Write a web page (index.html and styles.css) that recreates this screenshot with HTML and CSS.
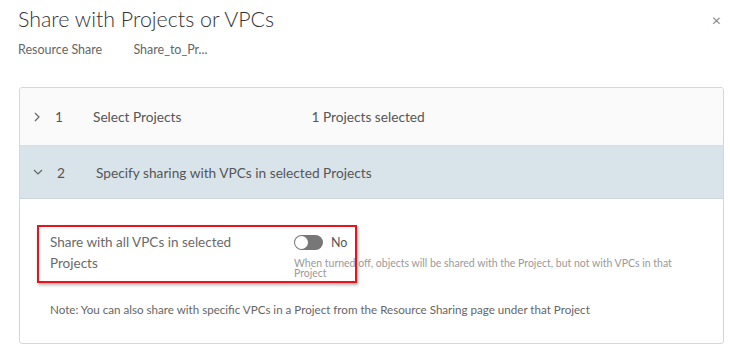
FILE: index.html
```html
<!DOCTYPE html>
<html lang="en">
<head>
  <meta charset="UTF-8">
  <title>Share with Projects or VPCs</title>
  <link rel="stylesheet" href="styles.css">
</head>
<body>
  <div class="modal">
    <div class="modal-head">
      <div class="modal-title">Share with Projects or VPCs</div>
      <div class="close">&times;</div>
    </div>
    <div class="crumbs">
      <span>Resource Share</span>
      <span>Share_to_Pr...</span>
    </div>

    <div class="stepper">
      <div class="step step-done">
        <svg class="chev" width="6" height="10" viewBox="0 0 6 10"><path d="M1 1 L5 5 L1 9" fill="none" stroke="#666" stroke-width="1.2"/></svg>
        <span class="num">1</span>
        <span class="step-name">Select Projects</span>
        <span class="step-sum">1 Projects selected</span>
      </div>
      <div class="step step-open">
        <svg class="chev-down" width="10" height="6" viewBox="0 0 10 6"><path d="M1 1 L5 5 L9 1" fill="none" stroke="#666" stroke-width="1.2"/></svg>
        <span class="num">2</span>
        <span class="step-name">Specify sharing with VPCs in selected Projects</span>
      </div>
      <div class="step-body">
        <div class="field">
          <div class="field-label">Share with all VPCs in selected<br>Projects</div>
          <div class="field-ctrl">
            <div class="toggle-line">
              <span class="toggle"><span class="knob"></span></span>
              <span class="toggle-text">No</span>
            </div>
            <div class="helper">When turned off, objects will be shared with the Project, but not with VPCs in that Project</div>
          </div>
        </div>
        <div class="note">Note: You can also share with specific VPCs in a Project from the Resource Sharing page under that Project</div>
      </div>
    </div>
  </div>
</body>
</html>
```

FILE: styles.css
```css
body {
  margin: 0;
  background: #fff;
  font-family: "Lato", "Open Sans", sans-serif;
  color: #565656;
}

.modal {
  padding: 6px 7px 0 18px;
}

.modal-head {
  display: flex;
  justify-content: space-between;
  align-items: center;
}

.modal-title {
  font-size: 21.4px;
  line-height: 26px;
  font-weight: 300;
  color: #333;
}

.close {
  font-size: 16px;
  color: #888;
  margin-right: 2px;
}

.crumbs {
  margin-top: 10px;
  font-size: 12.5px;
  line-height: 16px;
  color: #666;
}

.crumbs span + span {
  margin-left: 28px;
}

.stepper {
  margin-top: 29px;
  margin-left: 1px;
  width: 703px;
  border: 1px solid #d7d7d7;
  border-radius: 3px;
  overflow: hidden;
}

.step {
  display: flex;
  align-items: center;
  font-size: 13.7px;
  color: #565656;
  padding-left: 14px;
}

.step-done {
  height: 57px;
  background: #fafafa;
  border-bottom: 1px solid #dcdcdc;
}

.step-open {
  height: 52px;
  background: #d9e4ea;
  border-bottom: 1px solid #ccd6dc;
}

.chev {
  margin-right: 15px;
}

.chev-down {
  margin-left: -1px;
  margin-right: 14px;
}

.num {
  width: 38px;
}

.step-open .num {
  width: 39px;
}

.step-sum {
  margin-left: 130px;
}

.step-body {
  padding: 26px 0 26px 17px;
}

.field {
  display: flex;
  width: 305px;
  padding: 5px 0 3px 11px;
  border: 2px solid #e8141b;
  box-shadow: 1px 2px 3px rgba(0,0,0,0.3);
  font-size: 13.5px;
}

.field-label {
  flex-shrink: 0;
  width: 244px;
  line-height: 21px;
  color: #6a6a6a;
}

.field-ctrl {
  width: 61px;
}

.toggle-line {
  display: flex;
  align-items: center;
  height: 21px;
}

.toggle {
  flex-shrink: 0;
  width: 29px;
  height: 15px;
  border-radius: 8px;
  background: #777;
  position: relative;
}

.knob {
  position: absolute;
  left: 1px;
  top: 1px;
  width: 13px;
  height: 13px;
  border-radius: 50%;
  background: #fff;
}

.toggle-text {
  margin-left: 8px;
  font-size: 12.5px;
  color: #565656;
}

.helper {
  margin-top: 5px;
  width: 400px;
  font-size: 10.5px;
  line-height: 10px;
  color: #9a9a9a;
}

.note {
  margin-top: 20px;
  margin-left: 13px;
  font-size: 11.6px;
  line-height: 14px;
  color: #666;
}
```
